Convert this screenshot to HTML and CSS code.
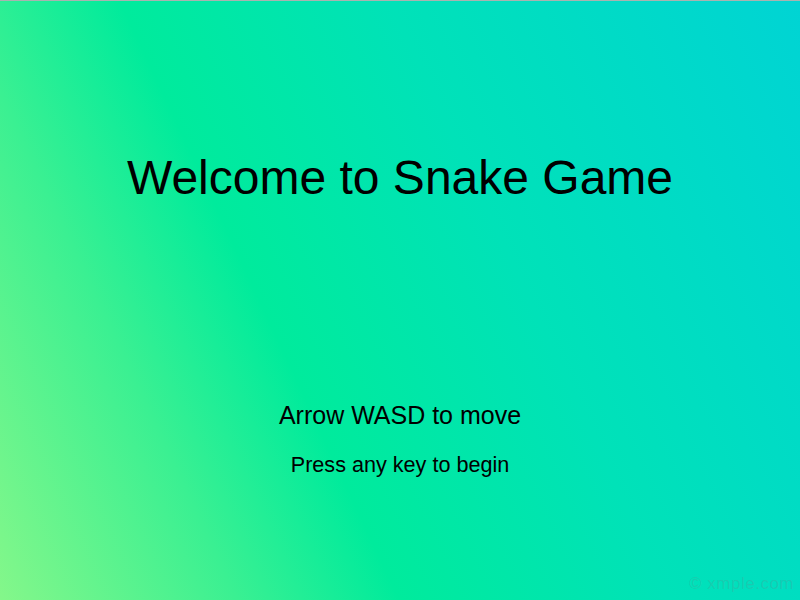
FILE: index.html
```html
<!DOCTYPE html>
<html lang="en">
<head>
<meta charset="utf-8">
<title>Snake Game</title>
<link rel="stylesheet" href="styles.css">
</head>
<body>
<main class="screen">
  <h1 class="title">Welcome to Snake Game</h1>
  <div class="help">
    <p class="controls">Arrow WASD to move</p>
    <p class="start">Press any key to begin</p>
  </div>
  <div class="watermark">© xmple.com</div>
</main>
</body>
</html>
```
FILE: styles.css
```css
html, body {
  margin: 0;
  padding: 0;
  height: 100%;
}
body {
  font-family: "Liberation Sans", Arial, sans-serif;
  color: #000;
}
.screen {
  position: relative;
  box-sizing: border-box;
  height: 600px;
  width: 800px;
  border-top: 1px solid #a9b3b0;
  background: linear-gradient(65deg, #84f78a 0%, #3af092 22%, #00eb9c 37%, #00e2b8 62%, #00d4d4 100%);
  display: flex;
  flex-direction: column;
  align-items: center;
  overflow: hidden;
}
.title {
  margin: 0;
  margin-top: 147px;
  font-size: 48px;
  font-weight: normal;
  line-height: 60px;
}
.help {
  margin-top: 192px;
  display: flex;
  flex-direction: column;
  align-items: center;
  gap: 22px;
}
.controls {
  margin: 0;
  font-size: 25px;
  line-height: 30px;
}
.start {
  margin: 0;
  font-size: 21.6px;
  line-height: 26px;
}
.watermark {
  position: absolute;
  right: 6px;
  bottom: 6px;
  font-size: 17px;
  color: rgba(110, 130, 130, 0.22);
  letter-spacing: 0.5px;
}
```
